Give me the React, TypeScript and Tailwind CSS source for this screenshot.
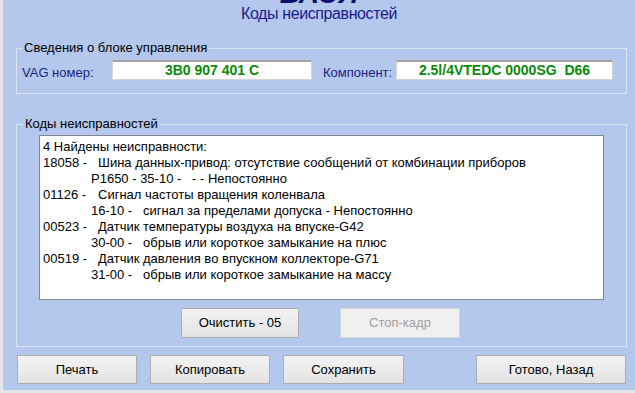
const faults = [
  {
    code: "18058 -",
    text: "Шина данных-привод: отсутствие сообщений от комбинации приборов",
    sub: "P1650 - 35-10 -",
    subText: "- - Непостоянно",
    subWide: true,
  },
  {
    code: "01126 -",
    text: "Сигнал частоты вращения коленвала",
    sub: "16-10 -",
    subText: "сигнал за пределами допуска - Непостоянно",
  },
  {
    code: "00523 -",
    text: "Датчик температуры воздуха на впуске-G42",
    sub: "30-00 -",
    subText: "обрыв или короткое замыкание на плюс",
  },
  {
    code: "00519 -",
    text: "Датчик давления во впускном коллекторе-G71",
    sub: "31-00 -",
    subText: "обрыв или короткое замыкание на массу",
  },
];

function Btn({ label, w, disabled }: { label: string; w: string; disabled?: boolean }) {
  return (
    <button
      className={
        disabled
          ? `${w} h-full border border-[#d6d6d6] bg-[#f0f0f0] text-[13px] text-[#a0a0a0]`
          : `${w} h-full border border-[#adadad] bg-gradient-to-b from-[#f3f3f3] to-[#e3e3e3] text-[13px] text-black`
      }
    >
      {label}
    </button>
  );
}

export default function App() {
  return (
    <div className="w-[635px] h-[393px] overflow-hidden bg-[#b4c8ee] border-l-[3px] border-b-[3px] border-[#e4e6ea] flex flex-col font-['Liberation_Sans',Arial,sans-serif]">
      {/* header: program name, scrolled mostly out of view */}
      <div className="h-[5px] overflow-hidden">
        <div className="-mt-[20px] h-[28px] text-center text-[28px] leading-[28px] font-bold italic text-[#0c0c6e]">
          ВАСЯ
        </div>
      </div>
      <div className="-mt-[1px] h-[20px] text-center text-[16px] leading-[20px] tracking-[-0.4px] text-[#1c1a88]">
        Коды неисправностей
      </div>

      {/* control unit info */}
      <div className="relative mt-[24px] ml-[13px] w-[611px] h-[46px] border border-[#dce4f3]">
        <span className="absolute -top-[9px] left-[5px] px-[2px] bg-[#b4c8ee] text-[13px] leading-[15px] text-black">
          Сведения о блоке управления
        </span>
        <div className="flex items-end pt-[11px] pl-[5px]">
          <span className="w-[90px] text-[13px] leading-[15px] text-[#1a2282]">VAG номер:</span>
          <div className="w-[200px] h-[20px] bg-white border border-[#d4d4d4] border-t-2 border-t-[#a2a2a2] flex items-center justify-center text-[14px] font-bold text-[#0a8a0a]">
            3B0 907 401 C
          </div>
          <span className="ml-[11px] w-[73px] text-[13px] leading-[15px] text-[#1a2282]">Компонент:</span>
          <div className="w-[217px] h-[20px] bg-white border border-[#d4d4d4] border-t-2 border-t-[#a2a2a2] flex items-center justify-center text-[14px] font-bold text-[#0a8a0a] whitespace-pre">
            2.5l/4VTEDC 0000SG  D66
          </div>
        </div>
      </div>

      {/* fault codes */}
      <div className="relative mt-[30px] ml-[13px] w-[611px] h-[223px] border border-[#dce4f3] flex flex-col">
        <span className="absolute -top-[9px] left-[6px] px-[2px] bg-[#b4c8ee] text-[13px] leading-[15px] text-black">
          Коды неисправностей
        </span>
        <div className="mt-[10px] ml-[22px] w-[565px] h-[165px] bg-white border border-[#848790] pt-[3px] pl-[3px] text-[13px] leading-[16px] text-black">
          <div>4 Найдены неисправности:</div>
          {faults.map((f) => (
            <div key={f.code}>
              <div className="flex">
                <span className="w-[55px] shrink-0">{f.code}</span>
                <span>{f.text}</span>
              </div>
              <div className="flex pl-[48px]">
                <span className={f.subWide ? "w-[101px] shrink-0" : "w-[52px] shrink-0"}>{f.sub}</span>
                <span>{f.subText}</span>
              </div>
            </div>
          ))}
        </div>
        <div className="flex h-[30px] mt-[8px] ml-[164px] gap-[41px]">
          <Btn label="Очистить - 05" w="w-[118px]" />
          <Btn label="Стоп-кадр" w="w-[120px]" disabled />
        </div>
      </div>

      {/* bottom buttons */}
      <div className="flex h-[29px] mt-[8px] ml-[14px]">
        <Btn label="Печать" w="w-[120px]" />
        <div className="w-[13px]" />
        <Btn label="Копировать" w="w-[120px]" />
        <div className="w-[13px]" />
        <Btn label="Сохранить" w="w-[121px]" />
        <div className="w-[72px]" />
        <Btn label="Готово, Назад" w="w-[150px]" />
      </div>
    </div>
  );
}
